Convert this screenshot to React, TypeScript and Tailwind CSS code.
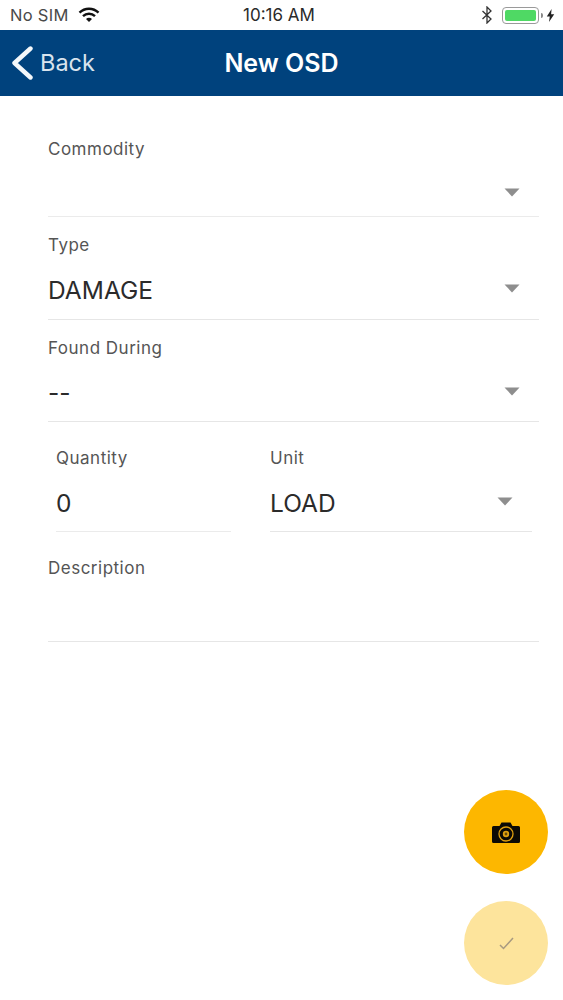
import React from 'react';

const Caret: React.FC = () => (
  <svg className="w-[16px] h-[9px] text-[#8e8e8e]" viewBox="0 0 16 9" fill="currentColor">
    <path d="M0.5 0.5h15L8 8.5z" />
  </svg>
);

const Label: React.FC<{ text: string }> = ({ text }) => (
  <div className="h-[20px] leading-[20px] text-[17px] text-[#555555] tracking-[0.5px]">{text}</div>
);

const Value: React.FC<{ text?: string; caret?: boolean }> = ({ text, caret }) => (
  <div className="h-[36px] mt-[17px] flex items-center justify-between">
    <span className="text-[24.5px] text-[#2b2b2b] leading-none">{text}</span>
    {caret && (
      <span className="mr-[19px] -mt-[4px] flex">
        <Caret />
      </span>
    )}
  </div>
);

export default function App() {
  return (
    <div className="relative w-[563px] h-[1000px] bg-white overflow-hidden font-['Inter',sans-serif]">
      {/* status bar */}
      <div className="relative h-[30px] flex items-center justify-between pl-[10px] pr-[8px] bg-white text-[#333333] text-[16.5px]">
        <div className="flex items-center gap-[9px]">
          <span className="text-[#4a4a4a] tracking-[0.3px]">No SIM</span>
          <svg className="w-[22px] h-[16px]" viewBox="0 0 22 16" fill="none" stroke="#111111" strokeWidth="2.4">
            <path d="M1.5 5.6a13.5 13.5 0 0 1 19 0" />
            <path d="M5 9.2a8.6 8.6 0 0 1 12 0" />
            <path d="M11 15l-3-3.1a4.2 4.2 0 0 1 6 0z" fill="#111111" stroke="none" />
          </svg>
        </div>
        <span className="absolute left-[243px] top-[3px] text-[17px] leading-[24px] text-[#2a2a2a]">10:16 AM</span>
        <div className="flex items-center gap-[2px]">
          <svg className="w-[12px] h-[18px] mr-[7px]" viewBox="0 0 12 18" fill="none" stroke="#333333" strokeWidth="1.3">
            <path d="M1.5 5l8.5 8-4 4V1l4 4-8.5 8" />
          </svg>
          <div className="w-[37px] h-[17px] rounded-[4px] border border-[#9a9a9a] p-[2px]">
            <div className="w-full h-full rounded-[2px] bg-[#4fd964]" />
          </div>
          <div className="w-[2px] h-[5px] bg-[#888888] rounded-r-sm" />
          <svg className="w-[9px] h-[13px] ml-[1px]" viewBox="0 0 9 13" fill="#222222">
            <path d="M5.6 0L0.8 7.4h3L3 13l5.2-7.8h-3.1z" />
          </svg>
        </div>
      </div>

      {/* nav bar */}
      <div className="relative h-[66px] bg-[#00427d] flex items-center text-white">
        <div className="flex items-center pl-[12px]">
          <svg className="w-[21px] h-[34px]" viewBox="0 0 21 34" fill="none" stroke="#f4f8fb" strokeWidth="4.4" strokeLinecap="round" strokeLinejoin="round">
            <path d="M18.5 2.5L2.5 17l16 14.5" />
          </svg>
          <span className="ml-[7px] text-[23.5px] text-[#d9e4ee] leading-none">Back</span>
        </div>
        <div className="absolute inset-x-0 top-0 h-[66px] flex items-center justify-center text-[25px] font-semibold leading-none">
          New OSD
        </div>
      </div>

      {/* form */}
      <div className="pl-[48px] pr-[24px]">
        <div className="h-[121px] pt-[43px] border-b border-[#ebebeb]">
          <Label text="Commodity" />
          <div className="mt-[7px]">
            <Value caret />
          </div>
        </div>
        <div className="h-[103px] pt-[18px] border-b border-[#e6e6e6]">
          <Label text="Type" />
          <Value text="DAMAGE" caret />
        </div>
        <div className="h-[102px] pt-[18px] border-b border-[#e6e6e6]">
          <Label text="Found During" />
          <Value text="--" caret />
        </div>
        <div className="h-[110px] pt-[26px] pl-[8px] pr-[7px] flex gap-[39px]">
          <div className="w-[175px] border-b border-[#ebebeb]">
            <Label text="Quantity" />
            <Value text="0" />
          </div>
          <div className="flex-1 border-b border-[#e6e6e6]">
            <Label text="Unit" />
            <Value text="LOAD" caret />
          </div>
        </div>
        <div className="h-[110px] pt-[26px] border-b border-[#e6e6e6]">
          <Label text="Description" />
        </div>
      </div>

      {/* floating buttons */}
      <div className="absolute right-[15px] top-[790px] flex flex-col gap-[27px]">
        <div className="w-[84px] h-[84px] rounded-full bg-[#fdb700] flex items-center justify-center">
          <svg className="w-[28px] h-[21px]" viewBox="0 0 28 21">
            <path d="M1.5 4h6l2-3.5h9l2 3.5h6a1.5 1.5 0 0 1 1.5 1.5v14a1.5 1.5 0 0 1-1.5 1.5h-25A1.5 1.5 0 0 1 0 19.5v-14A1.5 1.5 0 0 1 1.5 4z" fill="#0c0a05" />
            <circle cx="14" cy="12" r="7" fill="none" stroke="#e0a010" strokeWidth="1.3" />
            <circle cx="14" cy="12" r="3.2" fill="#e0a010" />
            <circle cx="14" cy="12" r="1.4" fill="#6a4c08" />
          </svg>
        </div>
        <div className="w-[84px] h-[84px] rounded-full bg-[#fde49c] flex items-center justify-center">
          <svg className="w-[15px] h-[13px]" viewBox="0 0 15 13" fill="none" stroke="#a89a80" strokeWidth="1.5">
            <path d="M1 8l3.5 3.5L14 1" />
          </svg>
        </div>
      </div>
    </div>
  );
}
